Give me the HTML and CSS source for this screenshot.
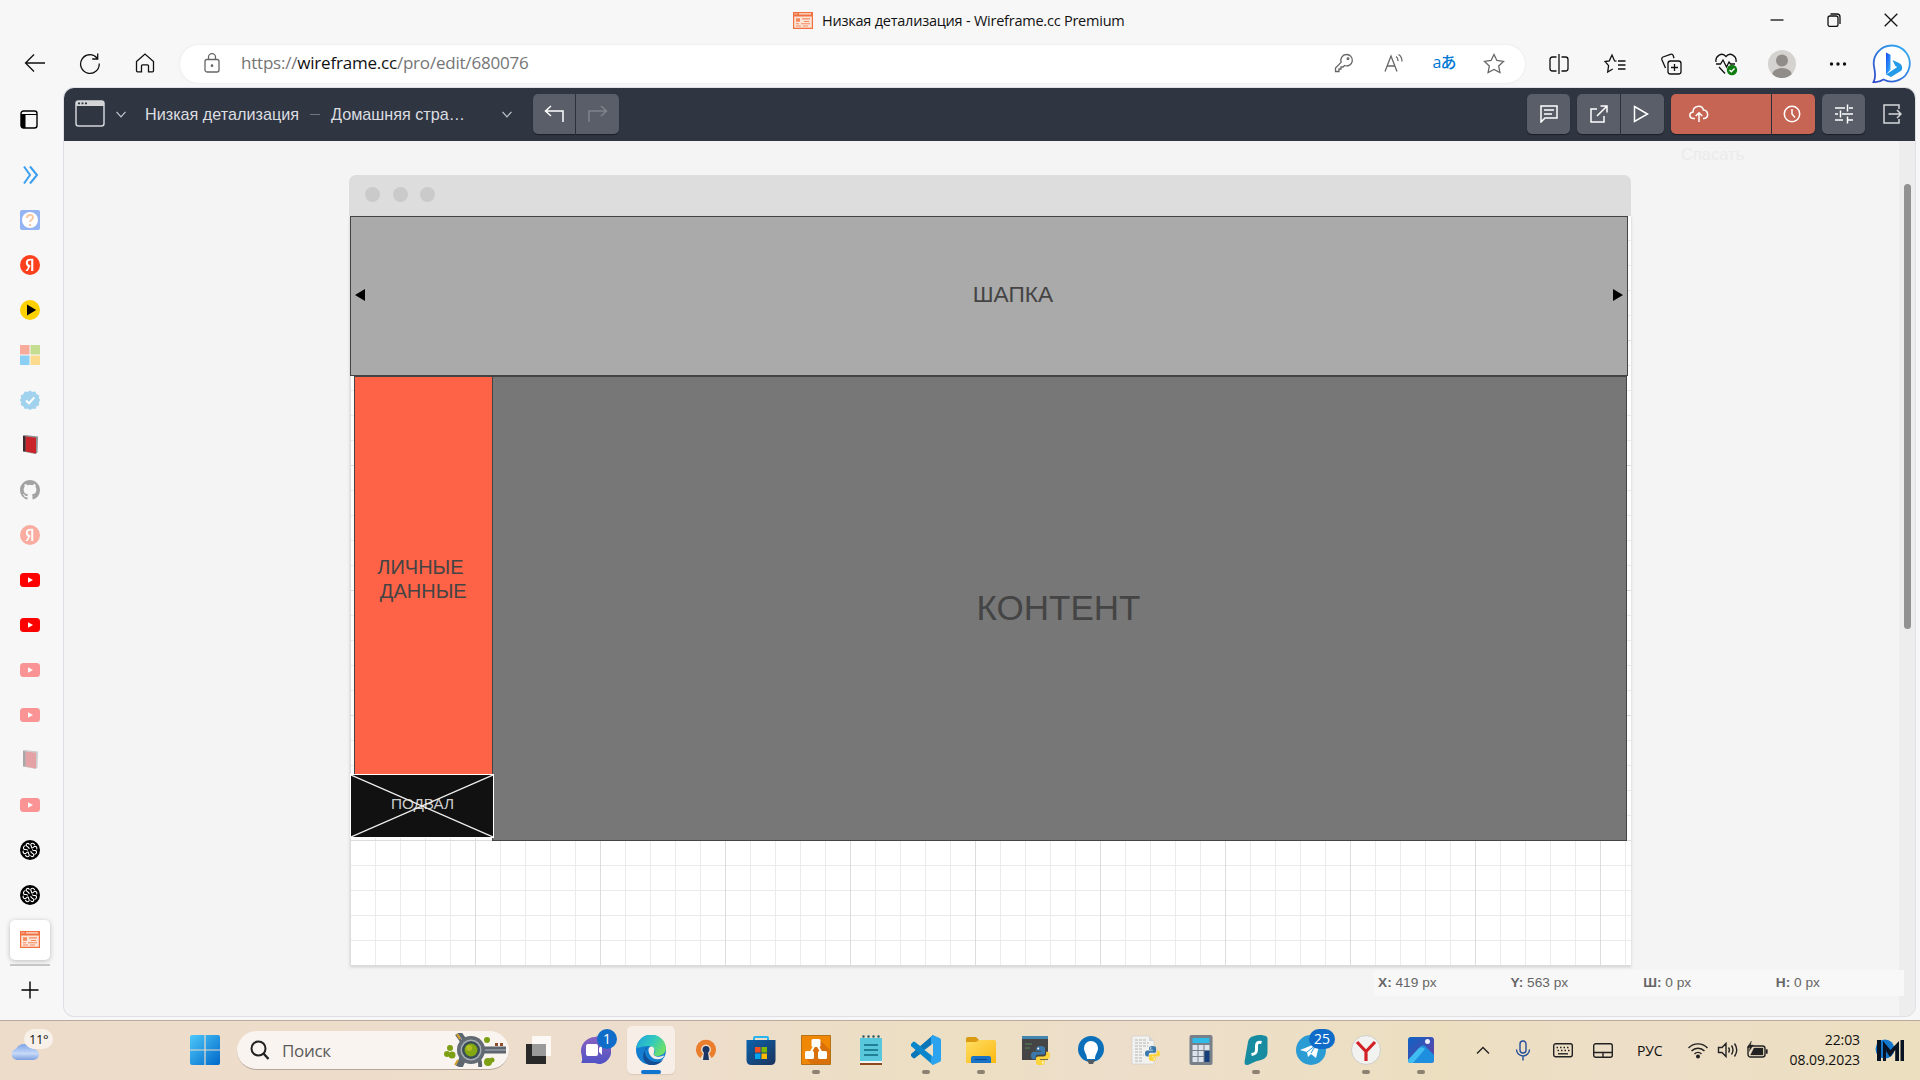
FILE: index.html
```html
<!DOCTYPE html>
<html lang="ru">
<head>
<meta charset="utf-8">
<title>Низкая детализация - Wireframe.cc Premium</title>
<link rel="stylesheet" href="styles.css">
</head>
<body>
<svg class="defs" width="0" height="0">
  <defs>
    <linearGradient id="gWin" x1="0" y1="0" x2="1" y2="1"><stop offset="0" stop-color="#4cc9fb"/><stop offset="1" stop-color="#0067c8"/></linearGradient>
    <linearGradient id="gEdge" x1="0" y1="0" x2="1" y2=".5"><stop offset="0" stop-color="#1d9fdc"/><stop offset=".55" stop-color="#32c8c0"/><stop offset="1" stop-color="#6ce06a"/></linearGradient>
    <linearGradient id="gBing" x1="0" y1="0" x2="1" y2="1"><stop offset="0" stop-color="#1b48ef"/><stop offset="1" stop-color="#37bdff"/></linearGradient>
    <linearGradient id="gRing" x1="0" y1="1" x2="1" y2="0"><stop offset="0" stop-color="#3049c9"/><stop offset="1" stop-color="#35b4f5"/></linearGradient>
    <linearGradient id="gFold" x1="0" y1="0" x2="1" y2="1"><stop offset="0" stop-color="#ffdd63"/><stop offset="1" stop-color="#fbb911"/></linearGradient>
    <linearGradient id="gStore" x1="0" y1="0" x2="1" y2="1"><stop offset="0" stop-color="#0a62ab"/><stop offset="1" stop-color="#1b335c"/></linearGradient>
    <linearGradient id="gPhoto" x1="0" y1="0" x2="1" y2="1"><stop offset="0" stop-color="#0c63c4"/><stop offset="1" stop-color="#6c3fa6"/></linearGradient>
    <linearGradient id="gCloud" x1="0" y1="0" x2="0" y2="1"><stop offset="0" stop-color="#7ea3e8"/><stop offset=".6" stop-color="#c6d9f7"/><stop offset="1" stop-color="#7c9fe0"/></linearGradient>
    <linearGradient id="gChat" x1="0" y1="0" x2="0" y2="1"><stop offset="0" stop-color="#8a63c0"/><stop offset="1" stop-color="#4f52c4"/></linearGradient>
    <symbol id="wf" viewBox="0 0 20 17"><path fill="#f0703f" d="M0 0h20v17H0z"/><path fill="#fde4d8" d="M1.2 4.6h17.6v11.2H1.2zM6 1.2h12v1.2H6zM1.4 1.2h1v1.2h-1zM3.4 1.2h1v1.2h-1z"/><path fill="#f58a5e" d="M3 6.2h4v3.600H3zM9 6.200h8v1.200H9zM11 9h5v1H11zM3 11.200h3v1H3zM8 11.200h9v1H8zM3 13.600h5v1H3zM10 13.600h5v1h-5z"/></symbol>
    <symbol id="ya" viewBox="0 0 20 20"><circle cx="10" cy="10" r="10" fill="#fc3f1d"/><path fill="#fff" fill-rule="evenodd" d="M13.300 16h-2.100V5.400h-1c-1.500 0-2.300.8-2.300 2 0 1.300.6 1.900 1.700 2.700l1 .7L7.700 16H5.500l2.700-4C6.700 10.900 5.800 9.700 5.800 7.700c0-2.500 1.700-4 4.500-4h3z"/></symbol>
    <symbol id="yt" viewBox="0 0 20 14"><rect width="20" height="14" rx="3.500" fill="#f00"/><path fill="#fff" d="M8 4.200v5.600l5-2.800z"/></symbol>
    <symbol id="book" viewBox="0 0 18 20"><path fill="#8e8f92" d="m2 .5 2-.5 13 1.500-.5 16-2 1.500L2 16.500z"/><path fill="#c9242a" d="M4.500 1.500 15 2.800V18.500L4.500 16.500z"/><path fill="#3b2a2c" d="m2 .8 2.500.7v15L2 16.200z"/></symbol>
    <symbol id="brain" viewBox="0 0 20 20"><circle cx="10" cy="10" r="10" fill="#000"/><g fill="none" stroke="#fff" stroke-width="1.100" stroke-linecap="round" stroke-linejoin="round"><path d="M9.200 4.200C8.200 2.600 6 3.400 6.200 5.200c.2 1.700 2.900 1.400 2.900 3.400M5 5.800C3 6.600 3 9 4.500 9.400c1.300.3 2.600-.4 2.900.8M3.200 11c-.4 1.800.8 3 2.300 2.400s1.300-1.700 2.700-1.400M5.500 15.300c.8 1.800 3.300 2 3.700.2.300-1.300-1-1.700-.7-2.700"/><path d="M10.800 15.800c1 1.600 3.200.8 3-1-.2-1.700-2.900-1.400-2.900-3.400M15 14.200c2-.8 2-3.200.5-3.600-1.300-.3-2.600.4-2.900-.8M16.800 9c.4-1.800-.8-3-2.300-2.400S13.200 8.300 11.800 8M14.500 4.700c-.8-1.800-3.300-2-3.700-.2-.3 1.300 1 1.700.7 2.700"/></g></symbol>
    <symbol id="py" viewBox="0 0 20 20"><path fill="#3c78aa" d="M10 0C6.500 0 5.500 1.200 5.500 3v2h5v1H3C1 6 0 7.500 0 10s1 4 2.800 4H5v-2.500C5 9.700 6.200 9 8 9h4.500c1.500 0 2.300-1 2.300-2.500V3C14.800 1 13.500 0 10 0z"/><path fill="#fdd43b" d="M10 20c3.500 0 4.500-1.200 4.500-3v-2h-5v-1H17c2 0 3-1.500 3-4s-1-4-2.800-4H16v2.500c0 1.800-1.200 2.500-3 2.500H7.500c-1.500 0-2.300 1-2.300 2.500V17c0 2 1.300 3 4.800 3z"/><circle cx="7.600" cy="2.600" r="1" fill="#fff"/><circle cx="12.400" cy="17.400" r="1" fill="#fff"/></symbol>
  </defs>
</svg>

<header class="titlebar">
  <svg class="fav" width="20" height="17"><use href="#wf"/></svg>
  <span class="wintitle">Низкая детализация - Wireframe.cc Premium</span>
  <div class="wincontrols">
    <svg width="14" height="14" viewBox="0 0 14 14"><path d="M.5 7h13"/></svg>
    <svg width="14" height="14" viewBox="0 0 14 14"><rect x="1" y="3" width="10" height="10.500" rx="2"/><path d="M3.500 1H10a3 3 0 0 1 3 3v7"/></svg>
    <svg width="14" height="14" viewBox="0 0 14 14"><path d="m.7.7 12.600 12.600M13.300.7.7 13.300"/></svg>
  </div>
</header>

<nav class="toolbar">
  <div class="navbtns">
    <svg width="22" height="22" viewBox="0 0 22 22"><path d="M21 11H2M10 2.500 1.500 11l8.500 8.500"/></svg>
    <svg width="22" height="22" viewBox="0 0 22 22"><path d="M18 6a9.300 9.300 0 1 0 2.200 5.500M18.700 1.500V7h-5.500"/></svg>
    <svg width="22" height="22" viewBox="0 0 22 22"><path d="M2.500 9.500 11 2l8.500 7.500v9.300q0 1-1 1h-4v-6q0-1-1-1h-5q-1 0-1 1v6h-4q-1 0-1-1z"/></svg>
  </div>
  <div class="address">
    <svg class="lock" width="16" height="20" viewBox="0 0 16 20"><rect x="1" y="6.500" width="14" height="12.500" rx="2"/><path d="M4.500 6.500V4.200a3.500 3.500 0 0 1 7 0v2.300"/><circle cx="8" cy="12.700" r=".7" fill="#666"/></svg>
    <span class="url">https://<b>wireframe.cc</b>/pro/edit/680076</span>
    <div class="addricons">
      <svg width="20" height="20" viewBox="0 0 20 20"><path d="M12.300 1.500a5.700 5.700 0 1 1-1.700 11L9 14H7v2H5v2.500H1.500V15L7.200 9.200a5.700 5.700 0 0 1 5.100-7.700z"/><circle cx="14" cy="5.700" r=".8"/></svg>
      <svg width="22" height="20" viewBox="0 0 22 20"><path d="M2 18.500 8 3l6 15.500M4.200 13h7.600M13 3.500c1.500 1 2 2.500 2 4.500M15.500 1.500c2.500 1.500 3.500 4 3.500 7"/></svg>
      <span class="translate">aあ</span>
      <svg width="22" height="21" viewBox="0 0 22 21"><path d="m11 1.500 2.900 6 6.600.9-4.800 4.600 1.200 6.500-5.900-3.100-5.900 3.100L6.300 13 1.500 8.400l6.600-.9z"/></svg>
    </div>
  </div>
  <div class="tools">
    <svg width="22" height="22" viewBox="0 0 22 22"><path d="M8.500 4h-4Q2 4 2 6.500v9Q2 18 4.500 18h4M13.500 4h4Q20 4 20 6.500v9q0 2.500-2.500 2.500h-4M11 1v20"/></svg>
    <svg width="22" height="22" viewBox="0 0 22 22"><path d="M12.500 8.200 10.600 8 8 2 5.300 7.800 1 8.500l3.600 4.200L3.700 19l5-3M14 8h7.500M14 12h7.500M14 16h7.500"/></svg>
    <svg width="22" height="22" viewBox="0 0 22 22"><rect x="8" y="8" width="13" height="13" rx="2.500"/><path d="M14.500 11v7M11 14.500h7M5.500 15 2 7q-.8-2 1-3l7.500-2.700q2-.7 2.700 1.200l.8 2.700"/></svg>
    <svg width="24" height="24" viewBox="0 0 24 24"><path d="M2 10C1 4 8-.5 12 4.500 16-.5 23 4 22 10M5 15l6 6.500M2 12h4.500L9 8l3.500 7 2.500-5 1.500 2H21"/><circle cx="18" cy="18" r="5.200" fill="#107c10" stroke="none"/><path d="m15.500 18 1.800 1.800 3.200-3.300" stroke="#fff"/></svg>
    <svg width="28" height="28" viewBox="0 0 28 28" class="flat"><clipPath id="av"><circle cx="14" cy="14" r="14"/></clipPath><g clip-path="url(#av)"><path fill="#d5d3d0" d="M0 0h28v28H0z"/><circle cx="14" cy="10.500" r="6" fill="#8f8c89"/><ellipse cx="14" cy="25" rx="10" ry="7" fill="#8f8c89"/></g></svg>
    <svg width="18" height="6" viewBox="0 0 18 6" class="flat"><circle cx="2.500" cy="3" r="1.700"/><circle cx="9" cy="3" r="1.700"/><circle cx="15.500" cy="3" r="1.700"/></svg>
    <svg width="40" height="40" viewBox="0 0 40 40" class="flat bing"><path fill="#fff" stroke="url(#gRing)" stroke-width="1.800" d="M20 1.500a18 18 0 1 1-8.500 34C8.500 37.500 5 38.500 1.500 38c2-3 2-8 .7-14.500A18 18 0 0 1 20 1.500z"/><path fill="url(#gBing)" d="m14 8.500 4.500 2.300v15L14 30.500z"/><path fill="#249bea" d="m14 30.500 5 2.500 10.500-6.500c1.500-3 .5-6-2.500-7.500l-6.500-3 2.800 6 2 1z"/></svg>
  </div>
</nav>

<div class="middle">
  <aside class="tabs">
    <svg class="tabicon" width="18" height="19" viewBox="0 0 18 19"><rect x="1" y="1" width="16" height="17" rx="2.500" fill="none" stroke="#000" stroke-width="1.400"/><path d="M1 4.500h16" stroke="#000"/><path d="M1 4h4.500v14H3q-2 0-2-2z"/></svg>
    <div class="tab"><svg width="18" height="20" viewBox="0 0 18 20"><path d="m3 1.500 6 8.500-6 8.500M9 1.500l7 8.500-7 8.500" fill="none" stroke="#3a9ff0" stroke-width="2"/></svg></div>
    <div class="tab"><svg width="20" height="20" viewBox="0 0 20 20"><rect width="20" height="20" rx="2" fill="#93b3f2"/><circle cx="10" cy="10" r="8" fill="#fff"/><path d="M7 8c0-4 6-4 6-.500 0 2.300-3 2.300-3 4.500" fill="none" stroke="#f8c9a0" stroke-width="2"/><circle cx="10" cy="15" r="1.200" fill="#f8c9a0"/></svg></div>
    <div class="tab"><svg width="20" height="20"><use href="#ya"/></svg></div>
    <div class="tab"><svg width="20" height="20" viewBox="0 0 20 20"><circle cx="10" cy="10" r="10" fill="#fdd000"/><path d="m7 4.500 9.200 5.500L7 15.500z"/></svg></div>
    <div class="tab"><svg width="20" height="20" viewBox="0 0 20 20"><path fill="#f7ab9a" d="M0 0h9.500v9.500H0z"/><path fill="#c5dd91" d="M10.500 0H20v9.500h-9.500z"/><path fill="#8ccff5" d="M0 10.500h9.500V20H0z"/><path fill="#fcda8e" d="M10.500 10.500H20V20h-9.500z"/></svg></div>
    <div class="tab"><svg width="20" height="20" viewBox="0 0 20 20"><path fill="#a1d2ee" stroke="#a1d2ee" stroke-linejoin="round" stroke-width="2" d="m10 1.500 2.200 1.500 2.600-.4 1 2.400 2.400 1-.4 2.600L19 10l-1.200 2 .4 2.500-2.400 1-1 2.400-2.600-.4L10 19l-2.200-1.500-2.600.4-1-2.400-2.400-1 .4-2.500L1 10l1.200-1.400L1.800 6l2.400-1 1-2.400 2.600.4z"/><path d="m6 10.500 3 2.800 5.300-6" fill="none" stroke="#fff" stroke-width="2"/></svg></div>
    <div class="tab"><svg width="18" height="20"><use href="#book"/></svg></div>
    <div class="tab"><svg width="20" height="20" viewBox="0 0 16 16"><path fill="#a3a3a3" d="M8 0C3.580 0 0 3.580 0 8c0 3.540 2.290 6.530 5.470 7.590.4.070.55-.17.55-.38 0-.19-.01-.82-.01-1.490-2.010.37-2.530-.49-2.690-.94-.09-.23-.48-.94-.82-1.130-.28-.15-.68-.52-.01-.53.63-.01 1.080.58 1.230.82.72 1.210 1.870.87 2.330.66.070-.52.28-.87.51-1.070-1.780-.2-3.640-.89-3.640-3.950 0-.87.31-1.590.82-2.150-.08-.2-.36-1.020.08-2.120 0 0 .67-.21 2.200.82a7.640 7.640 0 0 1 4 0c1.530-1.040 2.200-.82 2.200-.82.44 1.100.16 1.920.08 2.120.51.56.82 1.270.82 2.150 0 3.070-1.870 3.750-3.650 3.950.29.25.54.73.54 1.480 0 1.070-.01 1.930-.01 2.200 0 .21.15.46.55.38A8 8 0 0 0 16 8c0-4.420-3.580-8-8-8z"/></svg></div>
    <div class="tab faded"><svg width="20" height="20"><use href="#ya"/></svg></div>
    <div class="tab"><svg width="20" height="14"><use href="#yt"/></svg></div>
    <div class="tab"><svg width="20" height="14"><use href="#yt"/></svg></div>
    <div class="tab faded"><svg width="20" height="14"><use href="#yt"/></svg></div>
    <div class="tab faded"><svg width="20" height="14"><use href="#yt"/></svg></div>
    <div class="tab faded"><svg width="18" height="20"><use href="#book"/></svg></div>
    <div class="tab faded"><svg width="20" height="14"><use href="#yt"/></svg></div>
    <div class="tab"><svg width="20" height="20"><use href="#brain"/></svg></div>
    <div class="tab"><svg width="20" height="20"><use href="#brain"/></svg></div>
    <div class="tab"><div class="current"><svg width="20" height="17"><use href="#wf"/></svg></div></div>
    <div class="divider"></div>
    <svg class="plus" width="18" height="18" viewBox="0 0 18 18"><path d="M9 .5v17M.5 9h17" stroke="#000" stroke-width="1.400"/></svg>
  </aside>

  <main class="app">
    <div class="appbar">
      <svg class="screen" width="30" height="27" viewBox="0 0 30 27"><rect x="1" y="1" width="28" height="25" rx="2.500" fill="none" stroke="#d2d4d8" stroke-width="1.500"/><path fill="#d2d4d8" d="M1 3q0-2 2-2h24q2 0 2 2v3H1z"/><path fill="#2f3541" d="M3 2.500h2v1.800H3zM6.500 2.500h2v1.800h-2zM10 2.500h2v1.800h-2z"/></svg>
      <svg class="chev" width="10" height="7" viewBox="0 0 10 7"><path d="m.5.8 4.500 5 4.500-5"/></svg>
      <span class="project">Низкая детализация</span>
      <span class="dash"></span>
      <span class="page-name">Домашняя стра…</span>
      <svg class="chev" width="10" height="7" viewBox="0 0 10 7"><path d="m.5.8 4.500 5 4.500-5"/></svg>
      <div class="group history">
        <div class="btn"><svg width="20" height="18" viewBox="0 0 20 18"><path d="M7 1 1.500 6 7 11M2 6h17v11"/></svg></div>
        <div class="btn"><svg class="dim" width="20" height="18" viewBox="0 0 20 18"><path d="m13 1 5.500 5L13 11M18 6H1v11"/></svg></div>
      </div>
      <div class="actions">
        <div class="group"><div class="btn"><svg width="18" height="18" viewBox="0 0 18 18"><path d="M1 1h16v12H5l-4 4zM4 5h10M4 9h8"/></svg></div></div>
        <div class="group">
          <div class="btn"><svg width="18" height="18" viewBox="0 0 18 18"><path d="M7 4H1v13h13v-6M7 11 16.500 1.500M10.500 1H17v6.500"/></svg></div>
          <div class="btn play"><svg width="16" height="18" viewBox="0 0 16 18"><path d="m1.500 1.500 13 7.500-13 7.500z"/></svg></div>
        </div>
        <div class="group red">
          <div class="btn save"><svg width="20" height="18" viewBox="0 0 20 18"><path d="M6 13.500H4.500C0 13.500-.5 7.500 4 7 4 1 12.500-1 14.500 5c5 .5 6 8.500 0 8.500H14M10 17V8M6.700 11 10 7.700l3.300 3.300"/></svg></div>
          <div class="btn clockbtn"><svg width="18" height="18" viewBox="0 0 18 18"><circle cx="9" cy="9" r="7.700"/><path d="M9 4v5l3 3.500"/></svg></div>
        </div>
        <div class="group"><div class="btn"><svg width="18" height="20" viewBox="0 0 18 20"><path d="M0 4h10M14 4h4M12.500.5v7M0 10h3M7 10h11M5.500 6.500v7M0 16h8M12 16h6M12.500 12.500v7"/></svg></div></div>
        <svg class="exit" width="19" height="20" viewBox="0 0 19 20"><path d="M16 5V1H1v18h15v-4M5.500 10H18M14 6l4 4-4 4"/></svg>
      </div>
    </div>

    <div class="workspace">
      <div class="stage">
        <div class="ghost">Спасать</div>
        <div class="frame">
          <div class="frame-top"><i></i><i></i><i></i></div>
          <div class="canvas">
            <div class="shape head"><span>ШАПКА</span>
              <svg class="arrow-l" width="10" height="12" viewBox="0 0 10 12"><path d="M10 0v12L0 6z"/></svg>
              <svg class="arrow-r" width="10" height="12" viewBox="0 0 10 12"><path d="M0 0v12l10-6z"/></svg>
            </div>
            <div class="shape content"><span>КОНТЕНТ</span></div>
            <div class="shape personal"><span>ЛИЧНЫЕ<br>&nbsp;ДАННЫЕ</span></div>
            <div class="shape foot"><svg width="142" height="62" viewBox="0 0 142 62"><path d="m0 0 142 62M142 0 0 62" stroke="#eee" stroke-width="1.300"/></svg><span>ПОДВАЛ</span></div>
          </div>
        </div>
        <div class="status">
          <span><b>X:</b> 419 px</span><span><b>Y:</b> 563 px</span><span><b>Ш:</b> 0 px</span><span><b>H:</b> 0 px</span>
        </div>
      </div>
      <div class="scroll"><div class="thumb"></div></div>
    </div>
  </main>
</div>

<footer class="taskbar">
  <div class="weather"><svg width="26" height="20" viewBox="0 0 26 20" preserveAspectRatio="none"><path fill="url(#gCloud)" d="M6 19a6 6 0 0 1-.5-11.500A7.500 7.500 0 0 1 19.500 8 5.500 5.500 0 0 1 20 19z"/></svg><span class="temp">11°</span></div>
  <svg class="start" width="30" height="30" viewBox="0 0 30 30"><path fill="url(#gWin)" d="M2 0h12.400v14.400H0V2q0-2 2-2zM15.600 0H28q2 0 2 2v12.400H15.600zM0 15.600h14.400V30H2q-2 0-2-2zM15.600 15.600H30V28q0 2-2 2H15.600z"/></svg>
  <div class="search">
    <svg width="20" height="20" viewBox="0 0 20 20"><circle cx="8.500" cy="8.500" r="7" fill="none" stroke="#222" stroke-width="2"/><path d="m13.500 13.500 5 5.500" stroke="#222" stroke-width="2.400"/></svg>
    <span>Поиск</span>
    <svg class="roundabout" width="62" height="34" viewBox="0 0 62 34"><g stroke="#5d656f" fill="none" stroke-width="7"><path d="M34 17h28M14 0l7 10M20 23l-5 11" /><path d="M32 24q5 2 4 10" stroke-width="4"/></g><path d="M34 17h28M13 0l7 10" stroke="#ccd0d4" stroke-width=".8"/><circle cx="27" cy="17" r="14" fill="#626a74"/><circle cx="27" cy="17" r="10.500" fill="#a7adb2"/><circle cx="27" cy="17" r="9" fill="#394e57"/><circle cx="27" cy="17" r="6.500" fill="#83a812"/><circle cx="25" cy="15" r="3" fill="#b3bf1e"/><g fill="#7d9f13"><circle cx="6" cy="15" r="3"/><circle cx="3" cy="21" r="3"/><circle cx="8" cy="22" r="3.500"/><circle cx="43" cy="7" r="3"/><circle cx="44" cy="29" r="4"/><circle cx="48" cy="27" r="2.500"/></g><path fill="#914b2b" d="M51 10h3v3h-3zM56 10h3v3h-3z"/><path stroke="#d4a127" stroke-width="2" d="m13 1 3 5M14 27l-3 5"/></svg>
  </div>
  <div class="apps">
    <div class="cell"><svg width="30" height="30" viewBox="0 0 30 30"><path fill="#292929" d="M0 9h20v20H0z"/><path fill="#fff" fill-opacity=".8" d="M6 1h19v20H6z"/><path fill="#9a9a9a" d="M6 9h14v12H6z"/></svg></div>
    <div class="cell"><svg width="30" height="30" viewBox="0 0 30 30"><path fill="url(#gChat)" d="M14 2a12 14 0 1 1 0 26H0c2-2 1-6 0-11A14 14 0 0 1 14 2z"/><rect x="5" y="9" width="12" height="12" rx="2" fill="#fff"/><path fill="#fff" d="m18 13 3-3v10l-3-3z"/></svg><span class="badge one">1</span></div>
    <div class="cell active"><svg width="30" height="30" viewBox="0 0 30 30"><circle cx="15" cy="15" r="15" fill="#137dd0"/><path fill="url(#gEdge)" d="M.3 12A15 15 0 0 1 30 13c0 6-5 8-9 8-3 0-4-1-3-2.500 2-3-.5-7.500-6-7.500C6 11 1 14 .3 12z"/><path fill="#134d94" d="M9 15c-1 7 5 12 11 12 3 0 5-.7 7.500-2.500A15 15 0 0 1 13 29.800C6 27 5 18 12 12c-2 1-3 2-3 3z"/><path fill="#f6eee7" d="M12.500 15c0-2 1-3.400 3-3.400 2.500 0 3.500 3 2.300 6.400-1 2.500 2 3.800 5 3.800 2 0 4.200-.8 5.500-1.500-.8 2.500-3 4-7 4-5.300 0-8.800-5-8.800-9.300z"/></svg></div>
    <div class="cell"><svg width="24" height="24" viewBox="0 0 24 24"><path d="M6.500 20A10 10 0 1 1 17.500 20L15 15.500a5 5 0 1 0-6 0z" fill="#ea7e2c"/><circle cx="12" cy="11.500" r="3.500" fill="#1c3564"/><path fill="#1c3564" d="M10.300 12h3.400l1.300 10H9z"/></svg></div>
    <div class="cell"><svg width="30" height="30" viewBox="0 0 30 30"><path d="M8 6V3q0-1 1-1h12q1 0 1 1v3" fill="none" stroke="#27b4ef" stroke-width="2"/><path fill="url(#gStore)" d="M.5 5h29v20q0 5-5 5h-19q-5 0-5-5z"/><path fill="#f25022" d="M9 12h5.500v5.500H9z"/><path fill="#7fba00" d="M15.500 12H21v5.500h-5.500z"/><path fill="#00a4ef" d="M9 18.500h5.500V24H9z"/><path fill="#ffb900" d="M15.500 18.500H21V24h-5.500z"/></svg></div>
    <div class="cell run"><svg width="30" height="30" viewBox="0 0 30 30"><path fill="#f08705" stroke="#b57116" d="M.5.500h29v29H.5z"/><path fill="#d9700a" d="M19 5 29 15v14H10L5 23z"/><path d="m15 8-7 12M15 8l7 12" stroke="#fff" stroke-width="2"/><rect x="10.500" y="4" width="9" height="8" rx="1.500" fill="#fff"/><rect x="4" y="16" width="9" height="8" rx="1.500" fill="#fff"/><rect x="17" y="16" width="9" height="8" rx="1.500" fill="#fff"/></svg></div>
    <div class="cell"><svg width="24" height="30" viewBox="0 0 24 30"><path fill="#8d4a1c" d="M1 27h22v3H1z"/><path fill="#f5f5f5" d="M1 25h22v3H1z"/><path fill="#58c7dc" d="M1 3h22v23H1z"/><path stroke="#11697c" stroke-width="1.700" d="M5 10h14M5 15h14M5 20h14"/><path stroke="#2a5563" stroke-width="2.500" stroke-linecap="round" stroke-dasharray="0 5" d="M4.500 1.500v3M9.500 1.500v3M14.500 1.500v3M19.500 1.500v3"/></svg></div>
    <div class="cell run"><svg width="30" height="30" viewBox="0 0 30 30"><path fill="#0876b9" d="M22 0v9L4 23q-1 .8-2 0l-2-2q-.8-1 0-2z"/><path fill="#0b86cb" d="M22 30v-9L4 7q-1-.8-2 0L0 9q-.8 1 0 2z"/><path fill="#2ba3ee" d="m22 0 7 3.200q1 .5 1 2v19.600q0 1.500-1 2L22 30l-2-2V2z"/><path fill="#ecdfc6" d="M22 8.500v13L13.500 15z"/></svg></div>
    <div class="cell run"><svg width="30" height="30" viewBox="0 0 30 30"><path fill="#d89b13" d="M0 4q0-2 2-2h8l3 3v5H0z"/><path fill="url(#gFold)" d="M0 8q0-1 1-1h9l3-2h15q2 0 2 2v21H0z"/><path fill="#1a73c4" d="M5 28v-5q0-2 2-2h16q2 0 2 2v5z"/><path d="M9 24.500h12" stroke="#0c4b91"/></svg></div>
    <div class="cell"><svg width="30" height="30" viewBox="0 0 30 30"><path fill="#454545" d="M1 1h26v24H1z"/><path fill="#4386af" d="M1 1h26v3H1z"/><path stroke="#568858" d="M4 9h7M4 13h5"/><use href="#py" x="10" y="11" width="19" height="19"/></svg></div>
    <div class="cell"><svg width="28" height="30" viewBox="0 0 28 30"><circle cx="14" cy="14" r="13" fill="#0c6fb9"/><path fill="#fff" d="M14 6a7 7 0 0 1 7 7c0 4-3 6-3 11h-8c0-5-3-7-3-11a7 7 0 0 1 7-7z"/><path fill="#555b62" d="M10 25h8l-2 4h-4z"/></svg></div>
    <div class="cell"><svg width="30" height="30" viewBox="0 0 30 30"><path fill="#f1f1ef" stroke="#ccc" stroke-width=".6" d="M1 1h17l5 5v23H1z"/><path stroke="#b5b5b5" stroke-dasharray="3 1" d="M4 5h12M4 8h14M4 11h13M4 14h8M4 17h7M4 20h9M4 23h7M4 26h8"/><path fill="#d4d4d4" d="M18 1v5h5z"/><use href="#py" x="14" y="11" width="15" height="15"/></svg></div>
    <div class="cell"><svg width="24" height="30" viewBox="0 0 24 30"><rect x=".5" width="23" height="30" rx="2" fill="#777f89"/><path fill="#31bbe8" d="M3.500 3h17v5h-17z"/><path fill="#dde3ed" d="M3.500 10h5v5h-5zM9.500 10h5v5h-5zM15.500 10h5v5h-5zM3.500 16h5v5h-5zM9.500 16h5v5h-5zM3.500 22h5v5h-5zM9.500 22h5v5h-5z"/><path fill="#153f7b" d="M15.500 16h5v11h-5z"/></svg></div>
    <div class="cell run"><svg width="24" height="30" viewBox="0 0 24 30"><path fill="#178ca0" d="M10 1c4-1.500 10-1 12.500.5 1 .5 1 1.500 1 3V17c0 7-5 7.500-12 9.500-4 1.500-6 3.500-9 3.500C0 30 .5 27 1 24L4 7c.7-3.500 2.500-5 6-6z"/><path d="M17.500 7.500c-4-1-5 1-5 3.500v3.500c0 3-1 4.500-5 5" fill="none" stroke="#fff" stroke-width="3"/></svg></div>
    <div class="cell"><svg width="30" height="30" viewBox="0 0 30 30"><circle cx="15" cy="15" r="15" fill="#2b9bd4"/><path fill="#fff" d="m4 15 20-8-4 16-5-4-3 3-1-5z"/><path d="m11 17 9-7-5 8" stroke="#2b9bd4" fill="none"/></svg><span class="badge many">25</span></div>
    <div class="cell run"><svg width="30" height="30" viewBox="0 0 30 30"><circle cx="15" cy="15" r="14.500" fill="#f2f2f0" stroke="#d0cec8"/><path d="m6 7 9 9.500L24 7M15 15.500V26" fill="none" stroke="#d22027" stroke-width="3.200"/></svg></div>
    <div class="cell run"><svg width="28" height="28" viewBox="0 0 28 28"><rect x="1" y="1" width="26" height="26" rx="3" fill="url(#gPhoto)"/><path fill="#1e8ede" d="M1 24 14 10q2-1.500 4 0l9 9v5q0 3-3 3H4q-3 0-3-3z"/><path fill="#40bdf0" d="M1 24 12 12q3-2 6 1L6 27H4q-3 0-3-3z"/><circle cx="20.500" cy="5.500" r="2.500" fill="#eef"/></svg></div>
  </div>
  <div class="tray">
    <svg class="more" width="14" height="10" viewBox="0 0 14 10"><path d="m1 8.500 6-6 6 6"/></svg>
    <svg class="mic" width="16" height="21" viewBox="0 0 16 21"><rect x="5" y="1" width="6" height="12" rx="3"/><path d="M1.500 9.500a6.500 6.500 0 0 0 13 0M8 16v4.500"/></svg>
    <svg class="keyboard" width="20" height="15" viewBox="0 0 20 15"><rect x=".7" y=".8" width="18.600" height="13" rx="2"/><path stroke-dasharray="1.500 2" d="M3.500 4.500h13M4.500 7.500h12"/><path d="M5 10.800h10"/></svg>
    <svg class="touchpad" width="20" height="15" viewBox="0 0 20 15"><rect x=".7" y=".8" width="18.600" height="13.500" rx="2"/><path d="M1 9.500h18M10 9.500v5"/></svg>
    <span class="lang">РУС</span>
    <svg class="wifi" width="22" height="18" viewBox="0 0 22 18"><path d="M1.500 7a13 13 0 0 1 19 0M4.500 10a9 9 0 0 1 13 0M7.500 13a5 5 0 0 1 7 0"/><circle cx="11" cy="15.500" r="1.300" fill="#222"/></svg>
    <svg class="sound" width="22" height="18" viewBox="0 0 22 18"><path d="M1.500 6.500H5L9 2.500v13l-4-4H1.500zM11.500 6.500q1.800 2.500 0 5M14.500 4.500q3 4.500 0 9M17.500 2.500q4.500 6.500 0 13"/></svg>
    <svg class="battery" width="21" height="18" viewBox="0 0 21 18"><rect x="1" y="5" width="17" height="11" rx="2.500"/><path fill="#222" d="M7 7h9v7H3.500zM19 8.500h1.500v4H19zM4.500 0 0 6.500h3L2 10.500 6.500 4h-3z" stroke-width=".3"/></svg>
    <div class="clock"><span>22:03</span><span>08.09.2023</span></div>
    <svg class="flat" width="30" height="24" viewBox="0 0 30 24"><circle cx="10" cy="11" r="9.500" fill="#1377cc"/><path fill="#081423" d="M2 2h4v21H2zM8 3l7.500 9L24 3v20h-3.800V12L15 19l-4-6v10H8zM25.500 2H29v21h-3.500z"/></svg>
  </div>
</footer>
</body>
</html>
```
FILE: styles.css
```css
* { box-sizing: border-box; }
body {
  margin: 0;
  width: 1920px;
  height: 1080px;
  overflow: hidden;
  display: flex;
  flex-direction: column;
  background: #f7f7f7;
  font-family: "Open Sans", "Noto Sans", "Noto Sans CJK JP", sans-serif;
  color: #111;
}
svg { display: block; flex: none; }
.titlebar { height: 41px; display: flex; align-items: center; padding: 0 22px 1px 793px; flex: none; }
.fav { margin-right: 9px; }
.wintitle { font-size: 14.5px; letter-spacing: -0.23px; white-space: nowrap; }
.wincontrols { margin-left: auto; display: flex; gap: 43px; padding-bottom: 1px; }
.wincontrols svg, .navbtns svg, .tools svg { fill: none; stroke: #111; stroke-width: 1.300; }

.toolbar { height: 47px; flex: none; display: flex; align-items: center; padding: 0 0 2px 8px; }
.navbtns { display: flex; width: 172px; flex: none; padding-bottom: 1px; }
.navbtns svg { margin: 0 17px 0 16px; }
.address {
  width: 1345px; height: 38px; border-radius: 19px; background: #fff;
  display: flex; align-items: center; padding: 0 0 1px 24px; flex: none;
  box-shadow: 0 0 3px #e4e4e4;
}
.address svg { fill: none; stroke: #666; stroke-width: 1.300; }
.url { margin-left: 21px; font-size: 17px; letter-spacing: -0.21px; line-height: 22px; padding-bottom: 1px; color: #757575; white-space: nowrap; }
.url b { font-weight: 400; color: #111; }
.addricons { margin-left: auto; padding-right: 6px; display: grid; grid-template-columns: repeat(4, 50px); align-items: center; justify-items: center; }
.translate { color: #0078d4; font-size: 16px; line-height: 20px; white-space: nowrap; letter-spacing: -1px; font-weight: 500; padding-bottom: 2px; }
.tools { margin-left: 6px; display: grid; grid-template-columns: repeat(2, 56px) 55px 55px 57px 56px 52px; align-items: center; justify-items: center; }
.tools .flat { fill: #111; stroke: none; }

.middle { height: 932px; flex: none; display: flex; padding-bottom: 4px; }
.tabs { width: 64px; flex: none; display: flex; flex-direction: column; padding-left: 10px; }
.tabicon { margin: 22px 0 23.500px 10px; height: 19px; }
.tab { width: 40px; height: 45px; display: flex; align-items: center; justify-content: center; flex: none; }
.faded { opacity: .4; }
.current { width: 40px; height: 40px; border-radius: 5px; background: #fff; box-shadow: 0 1px 5px #bbb; display: flex; align-items: center; justify-content: center; padding-bottom: 1px; margin-bottom: 1px; }
.divider { width: 40px; height: 2px; background: #c6c6c6; margin-top: 1px; flex: none; }
.plus { margin: 15px 0 0 11px; }

.app { width: 1851px; flex: none; border-radius: 10px; overflow: hidden; display: flex; flex-direction: column; background: #f4f4f4; box-shadow: 0 0 0 1px #dfe0e5; }
.appbar { height: 53px; flex: none; background: #2f3541; display: flex; align-items: center; padding: 0 13px 1px 11px; font-family: "Liberation Sans", Arial, sans-serif; font-size: 16.200px; color: #dcdde0; white-space: nowrap; }
.appbar svg { fill: none; stroke: #fff; stroke-width: 1.500; }
.appbar .screen { stroke: none; margin-bottom: 1px; }
.appbar .chev { margin-left: 11px; stroke: #c5c7cc; stroke-width: 1.200; }
.project { margin-left: 19px; width: 165px; padding-top: 1px; }
.dash { width: 10px; height: 1px; background: #71757e; margin-right: 11px; }
.page-name { width: 159px; padding-top: 1px; }
.page-name + .chev { margin-left: 12px; }
.group { display: flex; gap: 1px; }
.btn { width: 43px; height: 40px; background: #5a5e68; display: flex; align-items: center; justify-content: center; box-shadow: 0 1px 1px #1b1f27; }
.btn:first-child { border-radius: 5px 0 0 5px; }
.btn:last-child { border-radius: 0 5px 5px 0; }
.btn:only-child { border-radius: 5px; }
.btn.play { padding-right: 4px; }
.btn.clockbtn { padding-right: 3px; }
.history { margin-left: 21px; }
.history .btn:first-child { width: 42px; }
.appbar .dim { stroke: #7f838b; }
.actions { margin-left: auto; display: flex; align-items: center; gap: 7px; }
.red .btn { background: #c66553; }
.red .btn.save { width: 100px; justify-content: flex-start; padding-left: 18px; }
.appbar .exit { margin-left: 11px; stroke: #d6d7da; }

.workspace { flex: 1; display: flex; min-height: 0; }
.stage { flex: 1; min-width: 0; position: relative; font-family: "Liberation Sans", Arial, sans-serif; }
.scroll { width: 16px; background: #ededed; padding: 43px 5px 0; }
.thumb { width: 7px; height: 445px; border-radius: 4px; background: #929292; }
.ghost { position: absolute; left: 1617px; top: 4px; font-size: 16.500px; color: #ebebeb; }
.frame { width: 1282px; margin: 34px 0 0 285px; }
.frame-top { height: 41px; background: #ddd; border-radius: 7px 7px 0 0; display: flex; gap: 12.500px; align-items: center; padding: 0 0 2px 16px; }
.frame-top i { width: 15px; height: 15px; border-radius: 50%; background: #cacaca; }
.canvas {
  position: relative; height: 750px; margin-left: 1px; background-color: #fff;
  background-image:
    linear-gradient(90deg, #dcdcdc 1px, transparent 1px),
    linear-gradient(#dcdcdc 1px, transparent 1px),
    linear-gradient(90deg, #ebebeb 1px, transparent 1px),
    linear-gradient(#ebebeb 1px, transparent 1px);
  background-size: 125px 125px, 125px 125px, 25px 25px, 25px 25px;
  background-position: 0 -1px;
  box-shadow: 0 1px 3px #ccc;
}
.shape { position: absolute; border: 1px solid #444; color: #444; text-align: center; white-space: nowrap; display: flex; align-items: center; justify-content: center; }
.head { left: 0; top: 0; width: 1278px; height: 160px; background: #aaa; font-size: 22.700px; padding: 0 0 3px 48px; }
.arrow-l { position: absolute; left: 4px; top: 72px; }
.arrow-r { position: absolute; right: 4px; top: 72px; }
.content { left: 142px; top: 160px; width: 1135px; height: 465px; background: #777; font-size: 35px; padding: 0 2px 1px 0; }
.personal { left: 4px; top: 160px; width: 139px; height: 399px; background: #ff6347; font-size: 20px; line-height: 24px; padding-top: 7px; padding-right: 6px; }
.foot { left: 0; top: 558px; width: 144px; height: 64px; background: #111; border-color: #fff; color: #ccc; font-size: 15.300px; padding: 0 0 4px 1px; }
.foot svg { position: absolute; left: 0; top: 0; }
.status { position: absolute; left: 1310px; top: 829px; width: 530px; height: 26px; background: #f8f8f8; display: grid; grid-template-columns: repeat(4, 132.600px); padding-left: 4px; line-height: 25px; font-size: 13.700px; color: #666; }

.taskbar { height: 60px; flex: none; border-top: 1px solid #b9aaa0; background: linear-gradient(90deg, #eddcc9 0, #edddcc 35%, #ecdfc2 50%, #eddecb 58%, #ecdfc0 75%, #eddec8 85%, #ecdfbf 100%); display: flex; align-items: center; padding-bottom: 1px; }
.weather { width: 190px; height: 59px; flex: none; padding: 20px 0 0 10px; position: relative; }
.weather svg { width: 30px; }
.temp { position: absolute; left: 24px; top: 8px; width: 29px; height: 20px; border-radius: 10px; background: #f7f1ea; text-align: center; font-size: 13px; line-height: 20px; letter-spacing: -0.5px; }
.search { margin-left: 17px; width: 272px; height: 39px; flex: none; border-radius: 20px; background: #f9f4ef; border-bottom: 1px solid #b5a69a; display: flex; align-items: center; padding: 0 3px 0 13px; font-size: 17px; letter-spacing: -0.3px; color: #5b5b5b; }
.search span { margin-left: 12px; padding-top: 1px; }
.roundabout { margin-left: auto; }
.apps { margin-left: 4px; display: grid; grid-template-columns: repeat(17, 55px); }
.cell { position: relative; height: 48px; display: flex; align-items: center; justify-content: center; }
.cell.active::before { content: ""; position: absolute; left: 4px; top: 0; width: 48px; height: 48px; border-radius: 5px; background: #f6eee7; box-shadow: 0 1px 1px #d9cabb; }
.active svg { position: relative; }
.run::after, .active::after { content: ""; position: absolute; left: 23.500px; bottom: 0; width: 8px; height: 4px; border-radius: 2px; background: #8c8170; }
.active::after { left: 18px; width: 20px; background: #0f75d0; }
.badge { position: absolute; top: 3px; height: 20px; border-radius: 10px; background: #0f6cc9; color: #fff; font-size: 14px; line-height: 20px; text-align: center; }
.one { left: 29px; width: 20px; }
.many { left: 26px; width: 26px; }

.tray { flex: 1; display: flex; align-items: center; }
.tray svg { fill: none; stroke: #222; stroke-width: 1.400; }
.tray .more { margin-left: 28px; }
.tray .mic { margin-left: 25px; stroke: #25509c; }
.keyboard { margin-left: 22px; }
.touchpad { margin-left: 20px; }
.lang { width: 26px; margin-left: 24px; font-size: 14px; letter-spacing: -0.2px; }
.wifi { margin-left: 24px; }
.sound, .battery { margin-left: 8px; }
.clock { width: 92px; display: flex; flex-direction: column; align-items: flex-end; font-size: 14px; line-height: 20px; letter-spacing: -0.1px; }
.tray .flat { margin-left: 15px; stroke: none; }
```
